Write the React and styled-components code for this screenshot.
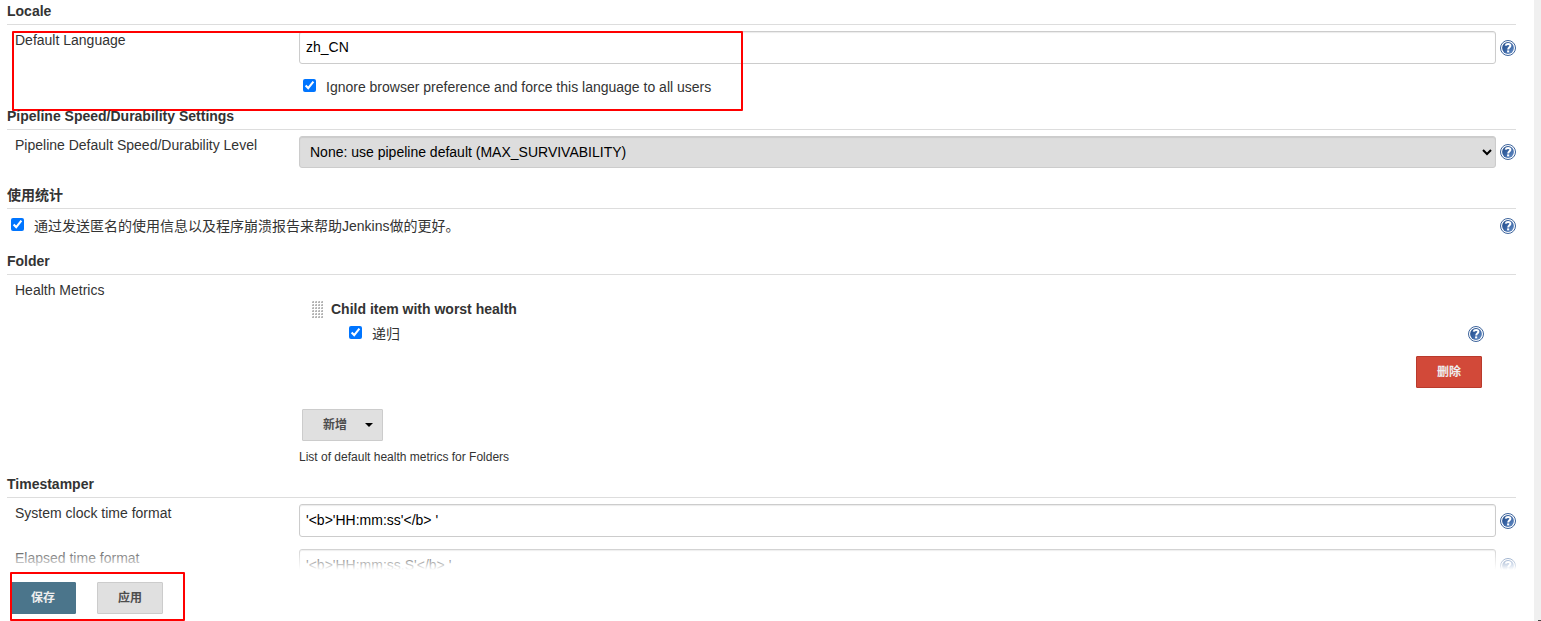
import React from "react";
import styled, { createGlobalStyle, css } from "styled-components";

const GlobalStyle = createGlobalStyle`
  *, *::before, *::after { box-sizing: border-box; }
  body {
    margin: 0;
    background: #fff;
    color: #333;
    font: 14px/16px "Liberation Sans", Arial, "Noto Sans CJK SC", sans-serif;
  }
  button, input, select { font-family: inherit; }
`;

const Shell = styled.div`
  display: flex;
  height: 100vh;
  overflow: hidden;
`;

const Main = styled.main`
  position: relative;
  flex: 1;
  min-width: 0;
  padding: 3px 18px 0 7px;
  overflow: hidden;
`;

const ScrollTrack = styled.div`
  display: flex;
  flex: none;
  align-items: flex-end;
  justify-content: flex-end;
  width: 7px;
  background: #f0f0f0;
`;

const ScrollCorner = styled.span`
  width: 3px;
  height: 1px;
  background: #444;
`;

const Section = styled.section`
  position: relative;
  padding-bottom: ${(p) => p.$space}px;
`;

const SectionTitle = styled.h2`
  margin: 0;
  padding-bottom: 5px;
  border-bottom: 1px solid #ddd;
  font-size: 14px;
  line-height: 16px;
`;

const Row = styled.div`
  display: grid;
  grid-template-columns: 284px minmax(0, 1fr) 16px;
  align-items: start;
  padding: 6px 0 0 8px;
  & + & { padding-top: 12px; }
`;

const labelStyle = css`
  padding-top: 1px;
  line-height: 16px;
`;
const RowLabel = styled.label`${labelStyle}`;
const GroupLabel = styled.span`${labelStyle}`;

const Control = styled.div`
  padding-right: 4px;
`;

const TextInput = styled.input`
  display: block;
  width: 100%;
  height: 33px;
  padding: 0 6px 2px;
  border: 1px solid #ccc;
  border-radius: 3px;
  box-shadow: inset 0 1px 1px rgba(0, 0, 0, 0.08);
  color: #000;
  background: #fff;
  font-size: 14px;
`;

const Select = styled.select`
  display: block;
  width: 100%;
  height: 32px;
  padding: 0 0 0 6px;
  border: 1px solid #ccc;
  border-radius: 3px;
  box-shadow: inset 0 1px 1px rgba(0, 0, 0, 0.08);
  color: #000;
  background-color: #ddd;
  font-size: 14px;
`;

const CheckLabel = styled.label`
  display: flex;
  flex: 1;
  align-items: flex-start;
  gap: 10px;
`;

const CheckBox = styled.input`
  flex: none;
  width: 13px;
  height: 13px;
  margin: 0;
`;

const PreferenceLine = styled.div`
  display: flex;
  padding: 15px 0 0 4px;
`;

const UsageLine = styled.div`
  display: flex;
  padding: 9px 0 0 4px;
`;

const HelpButton = styled.button`
  display: block;
  width: 16px;
  height: 16px;
  padding: 0;
  border: 0;
  background: none;
  svg { display: block; }
`;

const HelpSlot = styled.div`
  display: flex;
  align-items: center;
  height: ${(p) => p.$height}px;
`;

const MetricCard = styled.div`
  padding: 20px 12px 0 13px;
`;

const MetricTitle = styled.div`
  display: flex;
  gap: 7px;
  height: 16px;
  font-weight: bold;
`;

const Grip = styled.svg`
  display: block;
  width: 12px;
  height: 17px;
`;

const MetricOption = styled.div`
  display: flex;
  padding: 9px 0 0 37px;
`;

const MetricActions = styled.div`
  display: flex;
  justify-content: flex-end;
  padding: 14px 2px 0 0;
`;

const tones = {
  plain: css`color: #4d4d4d; background: #e0e0e0; border-color: #ccc;`,
  primary: css`color: #eee; background: #4b758b; border-color: #4b758b;`,
  danger: css`color: #eee; background: #d24939; border-color: #b93a2c;`,
};

const Button = styled.button`
  display: inline-flex;
  align-items: center;
  justify-content: center;
  gap: 18px;
  height: 32px;
  padding: 0 20px;
  border: 1px solid;
  border-radius: 1px;
  font-size: 12px;
  line-height: 16px;
  font-weight: bold;
  ${(p) => tones[p.$tone || "plain"]}
`;

const AddButton = styled(Button)`
  margin: 21px 0 0 3px;
  padding: 0 9px 0 20px;
`;

const Hint = styled.p`
  margin: 8px 0 0;
  font-size: 12px;
  line-height: 16px;
`;

const ActionBar = styled.div`
  position: absolute;
  right: 0;
  bottom: 0;
  left: 0;
  display: flex;
  gap: 21px;
  padding: 12px 10px 7px;
  background: #fff;
  &::before {
    content: "";
    position: absolute;
    right: 0;
    bottom: 100%;
    left: 0;
    height: 24px;
    background: linear-gradient(rgba(255, 255, 255, 0), #fff);
  }
`;

const Marker = styled.div`
  position: absolute;
  border: 2px solid #f00;
  border-radius: 1px;
  pointer-events: none;
`;

const LocaleMarker = styled(Marker)`
  top: 28px;
  left: 5px;
  width: 731px;
  height: 80px;
`;

const ActionMarker = styled(Marker)`
  bottom: 0;
  left: 10px;
  width: 175px;
  height: 49px;
`;

function Help({ topic }) {
  return (
    <HelpButton type="button" aria-label={`Help: ${topic}`}>
      <svg width="16" height="16" viewBox="0 0 16 16" aria-hidden="true">
        <defs>
          <linearGradient id="helpFill" x1="0" y1="0" x2="1" y2="1">
            <stop offset="0" stopColor="#204a87" />
            <stop offset="0.5" stopColor="#3a65a5" />
            <stop offset="1" stopColor="#6c94ca" />
          </linearGradient>
        </defs>
        <circle cx="8" cy="8" r="7.5" fill="#fff" stroke="#3d649c" strokeWidth="1" />
        <circle cx="8" cy="8" r="5.9" fill="url(#helpFill)" />
        <path d="M5.6 5.6C5.9 4.3 6.9 3.9 8.1 3.9C9.6 3.9 10.4 4.7 10.4 5.7C10.4 7.2 8.2 7.3 8.2 9.4" fill="none" stroke="#fff" strokeWidth="2" />
        <rect x="7.1" y="10.4" width="2.1" height="2" fill="#fff" />
      </svg>
    </HelpButton>
  );
}

function GripHandle() {
  const dots = [];
  for (let y = 0; y < 6; y += 1) {
    for (let x = 0; x < 4; x += 1) {
      dots.push(
        <g key={`${x}-${y}`}>
          <rect x={x * 3} y={y * 3} width="2" height="2" fill="#d4d4d4" />
          <path d={`M${x * 3} ${y * 3 + 1}h1v-1h1v2h-2z`} fill="#b4b4b4" />
        </g>
      );
    }
  }
  return <Grip viewBox="0 0 12 17" aria-hidden="true">{dots}</Grip>;
}

function TextRow({ id, label, value, children }) {
  return (
    <Row>
      <RowLabel htmlFor={id}>{label}</RowLabel>
      <Control>
        <TextInput id={id} type="text" defaultValue={value} />
        {children}
      </Control>
      <HelpSlot $height={33}><Help topic={label} /></HelpSlot>
    </Row>
  );
}

function Check({ children }) {
  return (
    <CheckLabel>
      <CheckBox type="checkbox" defaultChecked />
      {children}
    </CheckLabel>
  );
}

export default function App() {
  return (
    <Shell>
      <GlobalStyle />
      <Main>
        <Section $space={13}>
          <SectionTitle>Locale</SectionTitle>
          <TextRow id="language" label="Default Language" value="zh_CN">
            <PreferenceLine>
              <Check>Ignore browser preference and force this language to all users</Check>
            </PreferenceLine>
          </TextRow>
          <LocaleMarker />
        </Section>

        <Section $space={19}>
          <SectionTitle>Pipeline Speed/Durability Settings</SectionTitle>
          <Row>
            <RowLabel htmlFor="durability">Pipeline Default Speed/Durability Level</RowLabel>
            <Control>
              <Select id="durability">
                <option>None: use pipeline default (MAX_SURVIVABILITY)</option>
              </Select>
            </Control>
            <HelpSlot $height={32}><Help topic="Pipeline Default Speed/Durability Level" /></HelpSlot>
          </Row>
        </Section>

        <Section $space={19}>
          <SectionTitle>使用统计</SectionTitle>
          <UsageLine>
            <Check>通过发送匿名的使用信息以及程序崩溃报告来帮助Jenkins做的更好。</Check>
            <Help topic="使用统计" />
          </UsageLine>
        </Section>

        <Section $space={11}>
          <SectionTitle>Folder</SectionTitle>
          <Row>
            <GroupLabel>Health Metrics</GroupLabel>
            <Control>
              <MetricCard>
                <MetricTitle>
                  <GripHandle />
                  Child item with worst health
                </MetricTitle>
                <MetricOption>
                  <Check>递归</Check>
                  <Help topic="递归" />
                </MetricOption>
                <MetricActions>
                  <Button type="button" $tone="danger">删除</Button>
                </MetricActions>
              </MetricCard>
              <AddButton type="button">
                新增
                <svg width="8" height="4" viewBox="0 0 8 4" aria-hidden="true">
                  <path d="M0 0h8L4 4z" fill="#000" />
                </svg>
              </AddButton>
              <Hint>List of default health metrics for Folders</Hint>
            </Control>
          </Row>
        </Section>

        <Section $space={19}>
          <SectionTitle>Timestamper</SectionTitle>
          <TextRow id="clock" label="System clock time format" value="'<b>'HH:mm:ss'</b> '" />
          <TextRow id="elapsed" label="Elapsed time format" value="'<b>'HH:mm:ss.S'</b> '" />
        </Section>

        <ActionBar>
          <Button type="submit" $tone="primary">保存</Button>
          <Button type="button">应用</Button>
          <ActionMarker />
        </ActionBar>
      </Main>
      <ScrollTrack><ScrollCorner /></ScrollTrack>
    </Shell>
  );
}
